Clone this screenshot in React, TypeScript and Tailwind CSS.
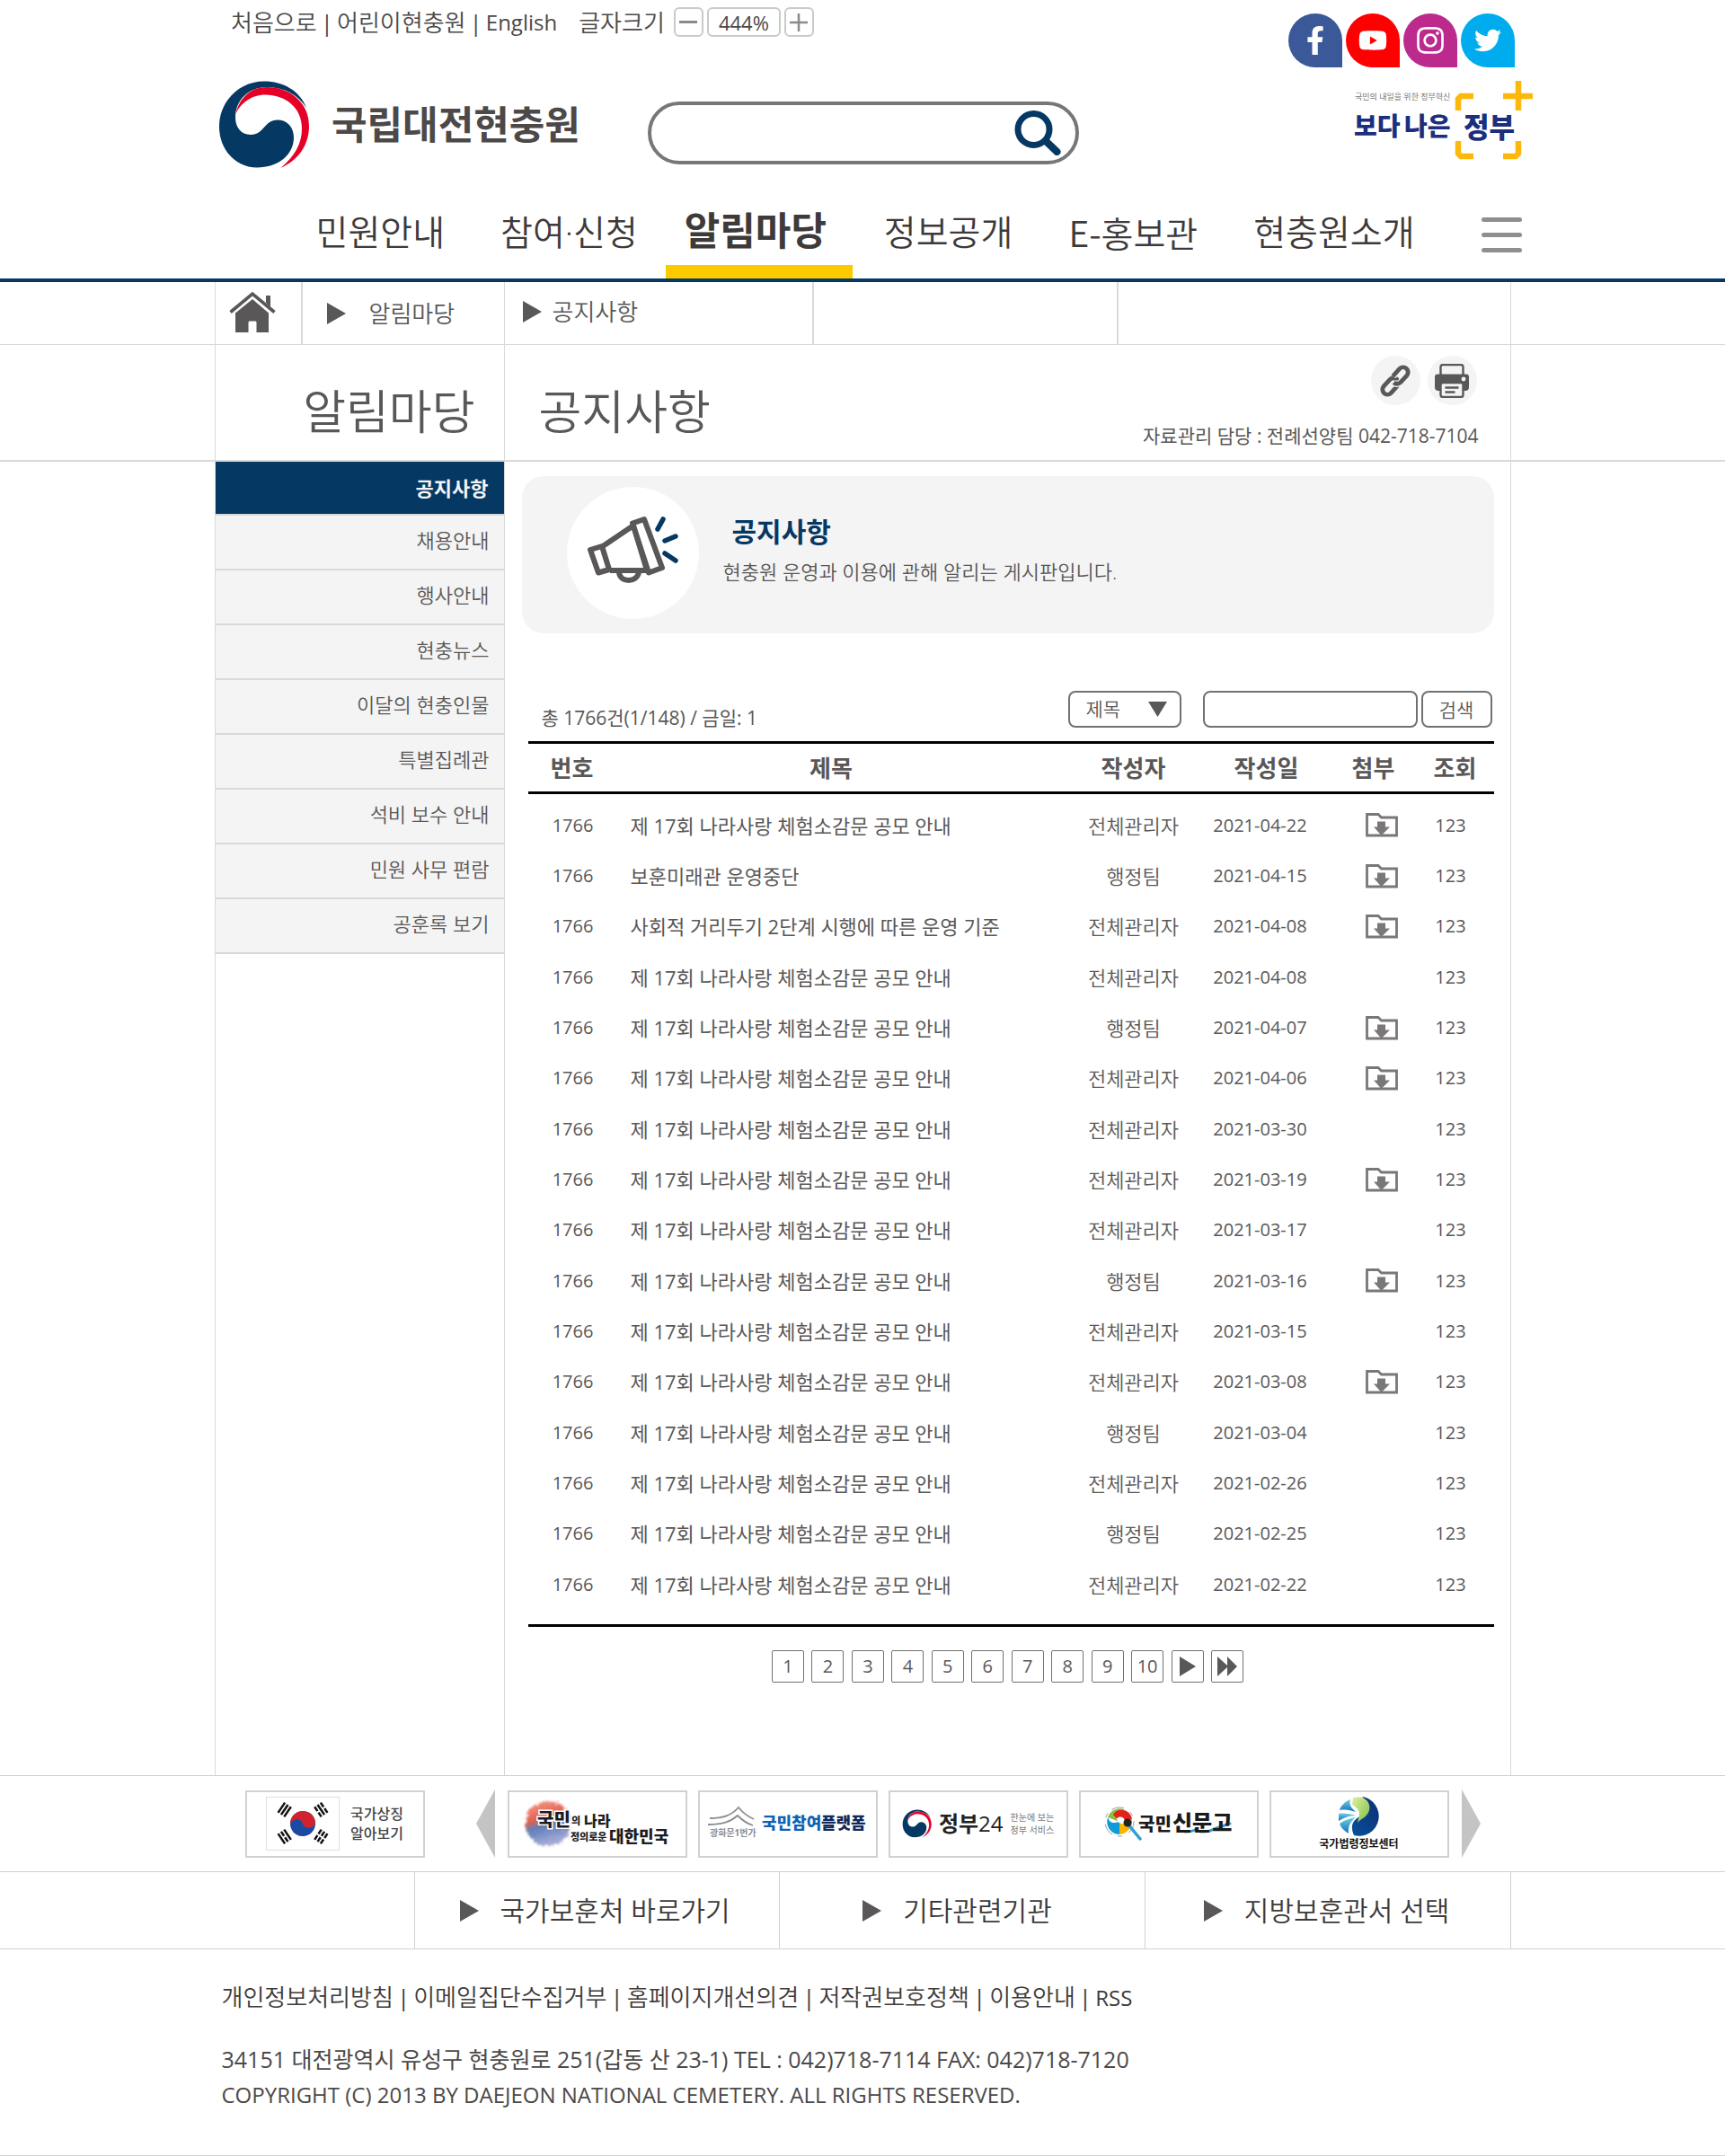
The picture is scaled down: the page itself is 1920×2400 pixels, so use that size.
import React from "react";
import { FaFacebookF, FaYoutube, FaInstagram, FaTwitter } from "react-icons/fa";

const NAVY = "#053863";

const mainMenu = ["민원안내", "참여·신청", "알림마당", "정보공개", "E-홍보관", "현충원소개"];

const sideMenu = [
  "공지사항",
  "채용안내",
  "행사안내",
  "현충뉴스",
  "이달의 현충인물",
  "특별집례관",
  "석비 보수 안내",
  "민원 사무 편람",
  "공훈록 보기",
];

const contest = "제 17회 나라사랑 체험소감문 공모 안내";
const admin = "전체관리자";
const team = "행정팀";

type Row = { title: string; author: string; date: string; file: boolean };

const rows: Row[] = [
  { title: contest, author: admin, date: "2021-04-22", file: true },
  { title: "보훈미래관 운영중단", author: team, date: "2021-04-15", file: true },
  { title: "사회적 거리두기 2단계 시행에 따른 운영 기준", author: admin, date: "2021-04-08", file: true },
  { title: contest, author: admin, date: "2021-04-08", file: false },
  { title: contest, author: team, date: "2021-04-07", file: true },
  { title: contest, author: admin, date: "2021-04-06", file: true },
  { title: contest, author: admin, date: "2021-03-30", file: false },
  { title: contest, author: admin, date: "2021-03-19", file: true },
  { title: contest, author: admin, date: "2021-03-17", file: false },
  { title: contest, author: team, date: "2021-03-16", file: true },
  { title: contest, author: admin, date: "2021-03-15", file: false },
  { title: contest, author: admin, date: "2021-03-08", file: true },
  { title: contest, author: team, date: "2021-03-04", file: false },
  { title: contest, author: admin, date: "2021-02-26", file: false },
  { title: contest, author: team, date: "2021-02-25", file: false },
  { title: contest, author: admin, date: "2021-02-22", file: false },
];

function Emblem({ className }: { className: string }) {
  return (
    <svg viewBox="0 0 103 98" className={className} aria-hidden="true">
      <path
        fill={NAVY}
        d="M99 30C92 11 73 .5 52 .5 24 .5 2 23 2 51c0 25 18 45.500 42 45.500S85 82 85 63c0-12-8-19.500-18-19.500C52 43.500 52 60 37 60 26 60 20 51 20 41 20 22 34 7 55 7c20 0 35 9 44 23Z"
      />
      <path
        fill="#e60027"
        d="M20 38C24 20 36 7 55 7c27 0 47 18 47 43 0 22-12 38-31.500 47C86 84 94 70 94 53 94 30 76 15.500 53 15.500 38 15.500 25 25 20 38Z"
      />
    </svg>
  );
}

function Triangle({ className = "" }: { className?: string }) {
  return (
    <svg viewBox="0 0 21 24" className={"h-6 w-[21px] shrink-0 fill-[#595757] " + className} aria-hidden="true">
      <path d="M0 0 21 12 0 24Z" />
    </svg>
  );
}

function HomeIcon() {
  return (
    <svg viewBox="0 0 52 46" className="h-[46px] w-[52px]" aria-hidden="true">
      <path d="M41 5h5v13l-5-5Z" fill="#595757" />
      <path d="M1.500 23.500 26 3l24.500 20.500" fill="none" stroke="#595757" strokeWidth="3.600" />
      <path d="M26 9 44 24.500V46H30.500V35c0-1-.5-1.500-1.500-1.500h-6c-1 0-1.500.5-1.500 1.500v11H7V24.500Z" fill="#595757" />
    </svg>
  );
}

function ChainIcon() {
  return (
    <svg viewBox="0 0 38 38" className="h-[38px] w-[38px]" fill="none" aria-hidden="true">
      <g transform="translate(19 19) rotate(-48)">
        <rect x="-18.500" y="-5.500" width="21" height="11" rx="5.500" stroke="#595757" strokeWidth="4.800" />
        <path d="M2-5.500h11a5.500 5.500 0 0 1 0 11H3a5.500 5.500 0 0 1-5.500-5.500" stroke="#f4f4f4" strokeWidth="7.500" />
        <path d="M2-5.500h11a5.500 5.500 0 0 1 0 11H3a5.500 5.500 0 0 1-5.500-5.500" stroke="#595757" strokeWidth="4.800" />
      </g>
    </svg>
  );
}

function PrinterIcon() {
  return (
    <svg viewBox="0 0 38 38" className="h-[38px] w-[38px]" aria-hidden="true">
      <rect x="6.500" y="1" width="25" height="16" rx="2.500" fill="#f4f4f4" stroke="#595757" strokeWidth="2.400" />
      <path d="M3 11.500h32a3 3 0 0 1 3 3V26a4 4 0 0 1-4 4H4a4 4 0 0 1-4-4V14.500a3 3 0 0 1 3-3Z" fill="#595757" />
      <circle cx="32" cy="17" r="2.400" fill="#f4f4f4" />
      <rect x="6.500" y="21" width="25" height="16" rx="2.500" fill="#f4f4f4" stroke="#595757" strokeWidth="2.400" />
      <path d="M11.500 26.500h15M11.500 31.500h11" stroke="#595757" strokeWidth="2.600" />
    </svg>
  );
}

function FolderDown() {
  return (
    <svg viewBox="0 0 36 27" className="mx-auto h-[27px] w-9" role="img" aria-label="첨부파일">
      <path d="M1.500 25V1.500H14L17.500 5H34.500V25Z" fill="none" stroke="#7a7777" strokeWidth="2.800" />
      <path d="M13 9.500h9v6h5L17.500 25 9 15.500h4Z" fill="#7a7777" />
    </svg>
  );
}

function Megaphone() {
  return (
    <svg viewBox="0 0 102 78" className="mb-1.5 h-[78px] w-[102px]" fill="none" strokeLinejoin="round" aria-hidden="true">
      <g stroke="#595757" strokeWidth="6">
        <path d="M4 38 17 34 25 60 13 63.500Z" />
        <path d="M18 34 52 11 67 61H26" />
        <path d="M51 8.500 64 4 84 58 69 63.500Z" />
        <path d="M36 63c1 12 20 12 22 0" />
      </g>
      <path d="M85 4 79 15M99 23 87 28M87 42l12 8" stroke={NAVY} strokeWidth="5.500" strokeLinecap="round" />
    </svg>
  );
}

function InnovationLogo() {
  return (
    <svg viewBox="0 0 200 90" className="h-[90px] w-[200px]" role="img" aria-label="국민의 내일을 위한 정부혁신 보다 나은 정부">
      <text x="1" y="21" fontSize="9" fill="#777777">국민의 내일을 위한 정부혁신</text>
      <g fill="#1b2f7d" fontWeight="900">
        <text x="0" y="61" fontSize="28">보다</text>
        <text x="56" y="61" fontSize="28">나은</text>
        <text x="122" y="63" fontSize="31">정부</text>
      </g>
      <g fill="none" stroke="#fdb90b" strokeWidth="6.500">
        <path d="M116 33V20l3-3h14M116 67v14l3 3h14M183 67v14l-3 3h-14" />
        <path d="M183 0v33M166 17h33" />
      </g>
    </svg>
  );
}

function Trigram({ x, y, angle, split }: { x: number; y: number; angle: number; split: number[] }) {
  return (
    <g transform={`translate(${x} ${y}) rotate(${angle})`} stroke="#111111" strokeWidth="2.600">
      {[-4.2, 0, 4.2].map((dy, i) => (
        <path key={dy} d={split[i] ? `M-7 ${dy}H-1M1 ${dy}H7` : `M-7 ${dy}H7`} />
      ))}
    </g>
  );
}

function Flag() {
  return (
    <svg viewBox="0 0 82 60" className="h-[60px] w-[82px] border border-[#dedede]" aria-hidden="true">
      <g transform="translate(41 30) rotate(-15)">
        <circle r="14.500" fill="#1b4ba0" />
        <path d="M-14.500 0a14.500 14.500 0 0 1 29 0c0 9-14.500 9-14.500 0s-14.500-9-14.500 0Z" fill="#d1232f" />
      </g>
      <Trigram x={20} y={14} angle={-56} split={[0, 0, 0]} />
      <Trigram x={62} y={14} angle={56} split={[1, 0, 1]} />
      <Trigram x={20} y={45} angle={56} split={[0, 1, 0]} />
      <Trigram x={62} y={45} angle={-56} split={[1, 1, 1]} />
    </svg>
  );
}

function PeopleNationLogo() {
  return (
    <svg viewBox="0 0 168 60" className="h-[60px] w-[168px]" role="img" aria-label="국민의 나라 정의로운 대한민국">
      <defs>
        <filter id="wash" x="-20%" y="-20%" width="140%" height="140%">
          <feTurbulence type="fractalNoise" baseFrequency="0.3" numOctaves="3" seed="4" />
          <feDisplacementMap in="SourceGraphic" scale="9" xChannelSelector="R" yChannelSelector="G" />
          <feGaussianBlur stdDeviation="0.8" />
        </filter>
        <linearGradient id="washFill" x1="0" y1="0" x2="0.3" y2="1">
          <stop offset="0" stopColor="#f3a08a" />
          <stop offset="0.45" stopColor="#e2604f" />
          <stop offset="0.62" stopColor="#5e7fb8" />
          <stop offset="1" stopColor="#a5a9d8" />
        </linearGradient>
      </defs>
      <ellipse cx="29" cy="30" rx="25" ry="25" fill="url(#washFill)" filter="url(#wash)" />
      <g fontWeight="900" fill="#1c1c22">
        <g stroke="#ffffff" strokeWidth="3" paintOrder="stroke">
          <text x="17" y="33" fontSize="20">국민</text>
          <text x="55" y="31" fontSize="11">의</text>
          <text x="69" y="33" fontSize="16">나라</text>
        </g>
        <text x="54" y="49" fontSize="11">정의로운</text>
        <text x="97" y="51" fontSize="18">대한민국</text>
      </g>
    </svg>
  );
}

function PlatformLogo() {
  return (
    <svg viewBox="0 0 180 40" className="h-10 w-[180px]" role="img" aria-label="광화문1번가 국민참여플랫폼">
      <g fill="none" stroke="#8b8d90" strokeWidth="1.800">
        <path d="M3 14c15 0 24-3 32-12 5 6 10 10 17 13" />
        <path d="M1 21c16 0 25-3 33-10 5 5 10 9 17 11" />
      </g>
      <text x="3" y="34" fontSize="10" fontWeight="700" fill="#8b8d90">광화문1번가</text>
      <g fontSize="18" fontWeight="900">
        <text x="61" y="26" fill="#0b63b5">국민참여</text>
        <text x="127" y="26" fill="#122a5c">플랫폼</text>
      </g>
    </svg>
  );
}

function Gov24Logo() {
  return (
    <div className="flex items-center gap-2">
      <Emblem className="h-8 w-[33px]" />
      <span className="flex items-baseline text-2xl leading-8 text-[#222222]">
        <b>정부</b>24
      </span>
      <span className="text-[10px] leading-[14px] text-[#777777]">
        한눈에 보는
        <br />
        정부 서비스
      </span>
    </div>
  );
}

function EPeopleLogo() {
  return (
    <svg viewBox="0 0 144 44" className="h-11 w-36" role="img" aria-label="국민신문고">
      <circle cx="17" cy="20" r="16" fill="none" stroke="#9a9a9a" strokeWidth="1" strokeDasharray="14 8 5 6" />
      <path d="M17 20 4 15a14 14 0 0 1 18-9Z" fill="#8cbf3f" />
      <path d="M17 20 10 12c4-8 19-7 21 5l-7 8Z" fill="#e2231a" />
      <path d="M17 20 31 17c1 9-5 16-14 17Z" fill="#f7b500" />
      <path d="M17 20v14C7 34 1 24 4 15c3 8 7 6 13 5Z" fill="#0f9bd8" />
      <path d="M14 16c5-4 10 0 9 6-4 1-9-1-9-6Z" fill="#ffffff" />
      <path d="m26 22 14 17" stroke="#2f9fd6" strokeWidth="3.500" strokeLinecap="round" />
      <circle cx="26" cy="21" r="4.500" fill="#222222" />
      <path d="M90 31c6 0 11-1 14-4M108 31c6 0 9 0 12-2M122 28l18-6" stroke="#2f9fd6" strokeWidth="3" fill="none" strokeLinecap="round" />
      <g fill="#1a1a1a" fontWeight="900">
        <text x="38" y="30" fontSize="20">국민</text>
        <text x="76" y="30" fontSize="24">신문고</text>
      </g>
    </svg>
  );
}

function LawLogo() {
  return (
    <div className="flex flex-col items-center">
      <svg viewBox="0 0 46 46" className="h-[46px] w-[46px]" aria-hidden="true">
        <defs>
          <linearGradient id="lawBlue" x1="0" y1="1" x2="1" y2="0">
            <stop offset="0" stopColor="#0a4f9c" />
            <stop offset="1" stopColor="#0b2f72" />
          </linearGradient>
          <linearGradient id="lawGreen" x1="0" y1="0" x2="1" y2="1">
            <stop offset="0" stopColor="#dff0a0" />
            <stop offset="1" stopColor="#7fbe45" />
          </linearGradient>
          <linearGradient id="lawSky" x1="0" y1="0" x2="0" y2="1">
            <stop offset="0" stopColor="#6fd0e6" />
            <stop offset="1" stopColor="#1272ba" />
          </linearGradient>
        </defs>
        <path d="M27 1a22 22 0 1 1-9 43c-6-14 2-18 8-22 8-6 8-14 1-21Z" fill="url(#lawBlue)" />
        <path d="M17 2c14-3 20 6 18 14-2 8-9 9-13 14 2-9 5-14-6-20Z" fill="url(#lawGreen)" />
        <path d="M14 4C7 7 3 12 2 16c7-1 12 0 18 2C16 14 12 11 14 4Z" fill="url(#lawSky)" />
        <path d="M1 20c6-1 12 0 19 2C12 22 6 25 1 28Z" fill="url(#lawSky)" />
        <path d="M2 31c6-4 11-6 18-7-6 5-9 10-8 18C7 39 3 35 2 31Z" fill="url(#lawSky)" />
      </svg>
      <span className="text-xs leading-4 font-bold text-[#111111]">국가법령정보센터</span>
    </div>
  );
}

function BannerLink({ children, label }: { children: React.ReactNode; label: string }) {
  return (
    <a
      href="#"
      aria-label={label}
      className="flex h-[75px] w-[200px] shrink-0 items-center justify-center overflow-hidden border-2 border-[#d0d1d2] bg-white"
    >
      {children}
    </a>
  );
}

function Social({ label, className, children }: { label: string; className: string; children: React.ReactNode }) {
  return (
    <a
      href="#"
      aria-label={label}
      className={"flex h-15 w-15 items-center justify-center rounded-full rounded-br-sm text-white " + className}
    >
      {children}
    </a>
  );
}

function Header() {
  return (
    <header className="border-b-4 border-[#053863]">
      <div className="mx-auto flex max-w-[1494px] justify-between pl-[29px]">
        <div className="flex flex-col">
          <div className="flex h-[49px] items-center pl-[15px] text-[26px] leading-8 text-[#4c4948]">
            <a href="#" className="font-[350]">처음으로</a>
            <span className="mx-1">|</span>
            <a href="#" className="font-[350]">어린이현충원</a>
            <span className="mx-1">|</span>
            <a href="#" className="text-2xl">English</a>
            <span className="ml-6 font-[350]">글자크기</span>
            <div className="ml-2.5 flex gap-1 text-[22px]">
              <button aria-label="글자 작게" className="flex h-[33px] w-[33px] items-center justify-center rounded-md border-2 border-[#c9caca]">
                <span className="h-[3px] w-5 bg-[#8a8a8a]" />
              </button>
              <output className="flex h-[33px] w-[82px] items-center justify-center rounded-md border-2 border-[#c9caca]">444%</output>
              <button aria-label="글자 크게" className="flex h-[33px] w-[33px] items-center justify-center rounded-md border-2 border-[#c9caca]">
                <svg viewBox="0 0 20 20" className="h-5 w-5" aria-hidden="true">
                  <path d="M10 0v20M0 10h20" stroke="#8a8a8a" strokeWidth="2.500" />
                </svg>
              </button>
            </div>
          </div>
          <div className="mt-[41px] flex items-center">
            <a href="#" className="flex items-center gap-[22px]">
              <Emblem className="h-[98px] w-[103px]" />
              <span className="w-[354px] pl-0.5 text-[43px] leading-[56px] font-bold text-[#4c4948]">국립대전현충원</span>
            </a>
            <form className="mt-[18px] flex h-[70px] w-[480px] items-center rounded-full border-4 border-[#777777] pr-4 pl-8">
              <input aria-label="통합검색" className="min-w-0 flex-1 text-2xl outline-none" />
              <button type="button" aria-label="검색">
                <svg viewBox="0 0 52 50" className="h-[50px] w-[52px]" fill="none" stroke={NAVY} aria-hidden="true">
                  <circle cx="21.500" cy="21" r="17.500" strokeWidth="7" />
                  <path d="m35 34 12.500 12" strokeWidth="8" strokeLinecap="round" />
                </svg>
              </button>
            </form>
          </div>
        </div>
        <div className="flex flex-col items-end gap-[15px] pt-[15px]">
          <div className="mr-[21px] flex gap-1">
            <Social label="페이스북" className="bg-[#3b5998]"><FaFacebookF size={32} /></Social>
            <Social label="유튜브" className="bg-[#ff0000]"><FaYoutube size={32} /></Social>
            <Social label="인스타그램" className="bg-[#bc2a8d]"><FaInstagram size={34} /></Social>
            <Social label="트위터" className="bg-[#00acee]"><FaTwitter size={30} /></Social>
          </div>
          <InnovationLogo />
        </div>
      </div>
      <div className="mx-auto mt-[31px] flex h-[91px] max-w-[1443px] items-stretch justify-between pl-[82px]">
        <nav className="flex" aria-label="주 메뉴">
          {mainMenu.map((item) =>
            item === "알림마당" ? (
              <a
                key={item}
                href="#"
                aria-current="page"
                className="mr-1 w-[208px] border-b-[15px] border-[#fdca00] pr-2 text-center text-[43px] leading-[76px] font-bold text-[#3e3a39]"
              >
                {item}
              </a>
            ) : (
              <a
                key={item}
                href="#"
                className={
                  "px-[31px] text-[39px] leading-[78px] font-[350] text-[#3e3a39] " +
                  (item.startsWith("E") ? "font-['Noto_Sans_CJK_KR',sans-serif]" : "")
                }
              >
                {item}
              </a>
            ),
          )}
        </nav>
        <button aria-label="전체 메뉴" className="-mr-3 flex w-[45px] flex-col gap-3 pt-[23px]">
          <span className="h-[5px] w-full rounded-full bg-[#8f8f8f]" />
          <span className="h-[5px] w-full rounded-full bg-[#8f8f8f]" />
          <span className="h-[5px] w-full rounded-full bg-[#8f8f8f]" />
        </button>
      </div>
    </header>
  );
}

function Breadcrumb() {
  return (
    <div className="border-b border-[#d9d9d9]">
      <nav aria-label="현재 위치" className="mx-auto flex h-[69px] max-w-[1443px] border-x border-[#d9d9d9] text-[26px] leading-8 font-[350] text-[#595757]">
        <a href="#" aria-label="홈" className="flex w-[97px] items-center justify-center border-r-2 border-[#d9d9d9] pr-3 pb-1">
          <HomeIcon />
        </a>
        <a href="#" className="flex w-[225px] items-center gap-[26px] border-r border-[#d9d9d9] pl-[27px]">
          <Triangle />
          알림마당
        </a>
        <a href="#" className="flex w-[344px] items-center gap-3 border-r-2 border-[#d9d9d9] pb-1 pl-5">
          <Triangle />
          공지사항
        </a>
        <span className="w-[339px] border-r-2 border-[#d9d9d9]" />
      </nav>
    </div>
  );
}

function TitleRow() {
  return (
    <div className="border-b-2 border-[#d9d9d9]">
      <div className="mx-auto flex h-32 max-w-[1443px] border-x border-[#d9d9d9] text-[#595757]">
        <h2 className="w-[322px] border-r border-[#d9d9d9] pt-10 pr-8 text-right text-[52px] leading-[68px] font-[350]">알림마당</h2>
        <h1 className="flex-1 pt-10 pl-[38px] text-[52px] leading-[68px] font-[350]">공지사항</h1>
        <div className="flex flex-col items-end pt-3 pr-[35px]">
          <div className="mr-0.5 flex gap-2">
            <button aria-label="주소 복사" className="flex h-[55px] w-[55px] items-center justify-center rounded-full bg-[#f4f4f4]">
              <ChainIcon />
            </button>
            <button aria-label="인쇄" className="flex h-[55px] w-[55px] items-center justify-center rounded-full bg-[#f4f4f4]">
              <PrinterIcon />
            </button>
          </div>
          <p className="mt-[18px] text-[21px] leading-8">자료관리 담당 : 전례선양팀 042-718-7104</p>
        </div>
      </div>
    </div>
  );
}

function SideMenu() {
  return (
    <nav aria-label="알림마당 메뉴" className="w-[322px] shrink-0 border-r border-[#d9d9d9] text-right text-[22px] text-[#595757]">
      {sideMenu.map((item, i) =>
        i === 0 ? (
          <a key={item} href="#" aria-current="page" className="block border-b-2 border-[#d9d9d9] bg-[#053863] pr-[17px] leading-[58px] font-bold text-[#f4f4f4]">
            {item}
          </a>
        ) : (
          <a key={item} href="#" className="block border-b-2 border-[#d9d9d9] bg-[#f4f4f4] pr-4 pb-1 leading-[55px] font-[350]">
            {item}
          </a>
        ),
      )}
    </nav>
  );
}

function Board() {
  return (
    <main className="flex-1 pr-[18px] pl-[19px] text-[#595757]">
      <section className="mt-4 flex h-[175px] gap-[27px] rounded-[24px] bg-[#f4f4f4] pt-3 pl-[50px]">
        <div className="flex h-[147px] w-[147px] items-center justify-center rounded-full bg-white">
          <Megaphone />
        </div>
        <div className="pt-[30px]">
          <h3 className="pl-2.5 text-[30px] leading-10 font-bold text-[#053863]">공지사항</h3>
          <p className="mt-2 text-[22px] leading-8 font-[350]">현충원 운영과 이용에 관해 알리는 게시판입니다.</p>
        </div>
      </section>

      <div className="mt-16 flex items-start justify-between pr-0.5 pl-[22px]">
        <p className="pt-[14px] text-[21px] leading-8">총 1766건(1/148) / 금일: 1</p>
        <form className="flex items-center text-[21px] font-[350]">
          <div className="relative">
            <select aria-label="검색 조건" className="h-[41px] w-[126px] appearance-none rounded-lg border-2 border-[#727171] bg-white pl-[18px]">
              <option>제목</option>
            </select>
            <svg viewBox="0 0 21 17" className="pointer-events-none absolute top-3 right-4 h-[17px] w-[21px] fill-[#595757]" aria-hidden="true">
              <path d="M0 0h21L10.500 17Z" />
            </svg>
          </div>
          <input aria-label="검색어" className="ml-6 h-[41px] w-[239px] rounded-lg border-2 border-[#727171] px-2" />
          <button type="button" className="ml-1 h-[41px] w-[79px] rounded-lg border-2 border-[#727171] leading-8">검색</button>
        </form>
      </div>

      <div className="mt-[10px] ml-[7px] border-b-[3px] border-black pb-4">
        <table className="h-[967px] w-full table-fixed border-collapse text-[22px] leading-8">
          <colgroup>
            <col className="w-[98px]" />
            <col />
            <col className="w-[170px]" />
            <col className="w-[118px]" />
            <col className="w-[108px]" />
            <col className="w-[90px]" />
          </colgroup>
          <thead>
            <tr className="h-14 border-y-[3px] border-black text-[26px]">
              <th>번호</th>
              <th className="pr-3">제목</th>
              <th>작성자</th>
              <th className="pl-2">작성일</th>
              <th className="pl-5">첨부</th>
              <th className="pl-1">조회</th>
            </tr>
          </thead>
          <tbody>
            <tr className="h-2" aria-hidden="true">
              <td colSpan={6} />
            </tr>
            {rows.map((row, i) => (
              <tr key={i}>
                <td className="pl-0.5 text-center text-xl">1766</td>
                <td className="pl-4">
                  <a href="#">{row.title}</a>
                </td>
                <td className="text-center font-[350]">{row.author}</td>
                <td className="pr-1.5 text-center text-xl">{row.date}</td>
                <td className="pl-[38px]">{row.file && <FolderDown />}</td>
                <td className="pr-1.5 text-center text-xl">123</td>
              </tr>
            ))}
          </tbody>
        </table>
      </div>

      <nav aria-label="페이지" className="mx-auto mt-[26px] mb-[103px] flex w-[525px] justify-between text-xl">
        {[1, 2, 3, 4, 5, 6, 7, 8, 9, 10].map((n) => (
          <a key={n} href="#" className="flex h-9 w-9 items-center justify-center rounded-xs border border-[#727171]">
            {n}
          </a>
        ))}
        <a href="#" aria-label="다음" className="flex h-9 w-9 items-center justify-center rounded-xs border border-[#727171]">
          <svg viewBox="0 0 18 22" className="h-[22px] w-[18px] fill-[#595757]" aria-hidden="true">
            <path d="M0 0 18 11 0 22Z" />
          </svg>
        </a>
        <a href="#" aria-label="마지막" className="flex h-9 w-9 items-center justify-center rounded-xs border border-[#727171]">
          <svg viewBox="0 0 22 22" className="h-[22px] w-[22px] fill-[#595757]" aria-hidden="true">
            <path d="M0 0 11 10V0L22 11 11 22V12L0 22Z" />
          </svg>
        </a>
      </nav>
    </main>
  );
}

function Banners() {
  return (
    <div className="border-y border-[#d0d1d2]">
      <div className="mx-auto flex h-[106px] max-w-[1443px] items-center justify-between pr-[34px] pl-[34px]">
        <BannerLink label="국가상징 알아보기">
          <div className="flex items-center gap-3">
            <Flag />
            <span className="text-base leading-[22px] font-medium text-[#444444]">
              국가상징
              <br />
              알아보기
            </span>
          </div>
        </BannerLink>
        <div className="flex items-center">
          <button aria-label="이전 배너" className="mr-[14px]">
            <svg viewBox="0 0 21 76" className="h-[76px] w-[21px] fill-[#c4c4c4]" aria-hidden="true">
              <path d="M21 0v76L0 38Z" />
            </svg>
          </button>
          <div className="flex gap-3">
            <BannerLink label="국민의 나라 정의로운 대한민국"><PeopleNationLogo /></BannerLink>
            <BannerLink label="광화문1번가 국민참여플랫폼"><PlatformLogo /></BannerLink>
            <BannerLink label="정부24"><Gov24Logo /></BannerLink>
            <BannerLink label="국민신문고"><EPeopleLogo /></BannerLink>
            <BannerLink label="국가법령정보센터"><LawLogo /></BannerLink>
          </div>
          <button aria-label="다음 배너" className="ml-[14px]">
            <svg viewBox="0 0 21 76" className="h-[76px] w-[21px] fill-[#c4c4c4]" aria-hidden="true">
              <path d="M0 0v76l21-38Z" />
            </svg>
          </button>
        </div>
      </div>
    </div>
  );
}

function QuickLinks() {
  return (
    <div className="border-b border-[#d0d1d2]">
      <div className="mx-auto grid h-[85px] max-w-[1443px] grid-cols-3 border-r border-[#d0d1d2] pl-[222px] text-[30px] leading-10 font-[350] text-[#3e3a39]">
        <a href="#" className="flex items-center gap-6 border-l border-[#d0d1d2] pl-[50px]"><Triangle />국가보훈처 바로가기</a>
        <a href="#" className="flex items-center gap-6 border-l border-[#d0d1d2] pl-[92px]"><Triangle />기타관련기관</a>
        <a href="#" className="flex items-center gap-6 border-l border-[#d0d1d2] pl-[65px]"><Triangle />지방보훈관서 선택</a>
      </div>
    </div>
  );
}

function Footer() {
  const links = ["개인정보처리방침", "이메일집단수집거부", "홈페이지개선의견", "저작권보호정책", "이용안내"];
  return (
    <footer className="border-b border-[#d0d1d2] text-[#4c4948]">
      <div className="mx-auto max-w-[1443px] pt-[33px] pb-[47px] pl-2">
        <ul className="flex text-[26px] leading-10 text-[#3e3a39]">
          {links.map((link) => (
            <li key={link} className="flex">
              <a href="#" className="font-[350]">{link}</a>
              <span className="mx-1">|</span>
            </li>
          ))}
          <li>
            <a href="#" className="text-2xl leading-10">RSS</a>
          </li>
        </ul>
        <address className="mt-7 text-[25px] leading-10 not-italic">
          34151 대전광역시 유성구 현충원로 251(갑동 산 23-1) TEL : 042)718-7114 FAX: 042)718-7120
        </address>
        <p className="text-2xl leading-10">COPYRIGHT (C) 2013 BY DAEJEON NATIONAL CEMETERY. ALL RIGHTS RESERVED.</p>
      </div>
    </footer>
  );
}

export default function App() {
  return (
    <div className="bg-white font-['Open_Sans','Noto_Sans_CJK_KR',sans-serif] break-keep whitespace-nowrap">
      <Header />
      <Breadcrumb />
      <TitleRow />
      <div className="mx-auto flex max-w-[1443px] border-x border-[#d9d9d9]">
        <SideMenu />
        <Board />
      </div>
      <Banners />
      <QuickLinks />
      <Footer />
    </div>
  );
}
